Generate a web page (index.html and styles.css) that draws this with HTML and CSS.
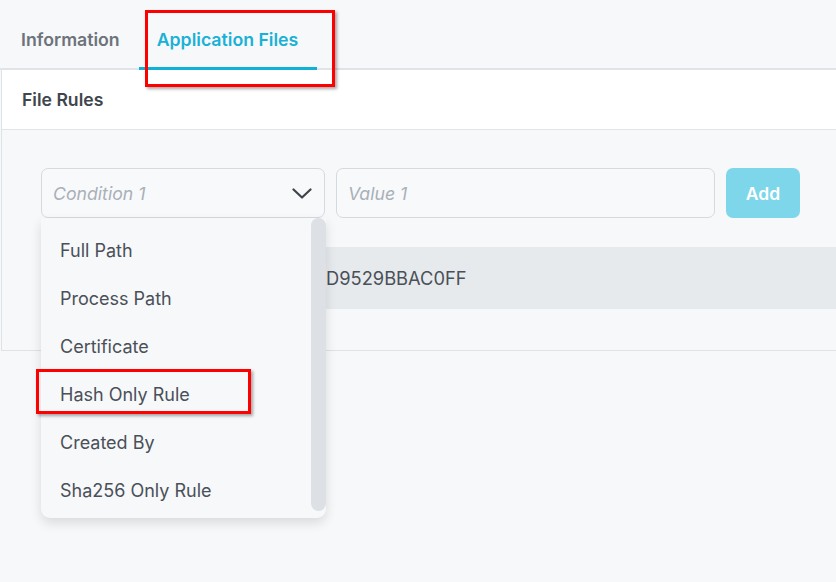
FILE: index.html
```html
<!DOCTYPE html>
<html>
<head>
<meta charset="utf-8">
<link rel="stylesheet" href="styles.css">
</head>
<body>
<div class="tabs">
  <div class="tab">Information</div>
  <div class="tab active">Application Files</div>
</div>
<div class="panel">
  <div class="panel-header">File Rules</div>
  <div class="panel-body">
    <div class="form-row">
      <div class="select">
        <span class="placeholder">Condition 1</span>
        <svg class="chevron" width="20" height="11" viewBox="0 0 20 11"><polyline points="1.5,1.5 10,9.5 18.5,1.5" fill="none" stroke="#3e444a" stroke-width="2.2" stroke-linecap="round" stroke-linejoin="round"/></svg>
      </div>
      <div class="input"><span class="placeholder">Value 1</span></div>
      <button class="add">Add</button>
    </div>
    <div class="rule-row">
      <div class="cell-type">Hash Only Rule</div>
      <div class="cell-value">D9529BBAC0FF</div>
    </div>
  </div>
</div>

<div class="dropdown">
  <div class="option">Full Path</div>
  <div class="option">Process Path</div>
  <div class="option">Certificate</div>
  <div class="option">Hash Only Rule</div>
  <div class="option">Created By</div>
  <div class="option">Sha256 Only Rule</div>
  <div class="scrollbar"></div>
</div>

<div class="mark mark-tab"></div>
<div class="mark mark-option"></div>
</body>
</html>
```
FILE: styles.css
```css
* { box-sizing: border-box; }
html, body {
  margin: 0;
  padding: 0;
  background: #f7f8fa;
  font-family: "Inter", "Lato", sans-serif;
  color: #4a5058;
  width: 836px;
  height: 582px;
  overflow: hidden;
  position: relative;
}
.tabs {
  display: flex;
  height: 70px;
  padding-left: 2px;
  border-bottom: 2px solid #e0e3e7;
}
.tab {
  position: relative;
  display: flex;
  align-items: center;
  padding: 10px 19px 0;
  font-size: 17.7px;
  font-weight: 600;
  color: #6c737b;
}
.tab.active { color: #19b1d6; padding-left: 18px; }
.tab.active::after {
  content: "";
  position: absolute;
  left: 0;
  right: 0;
  bottom: -2px;
  height: 3px;
  background: #11b0d7;
}
.panel {
  margin-left: 1px;
  border-left: 1px solid #dfe2e6;
  border-bottom: 1px solid #dfe2e6;
}
.panel-header {
  background: #ffffff;
  height: 60px;
  padding-left: 20px;
  padding-bottom: 1px;
  display: flex;
  align-items: center;
  font-size: 17.6px;
  font-weight: 600;
  color: #40464d;
  border-bottom: 1px solid #e1e4e8;
}
.panel-body {
  padding: 38px 0 41px 39px;
}
.form-row {
  display: flex;
  gap: 11px;
  height: 50px;
}
.select, .input {
  border: 1px solid #d6d9de;
  border-radius: 7px;
  display: flex;
  align-items: center;
  padding-left: 11px;
  background: #f8f9fb;
}
.select { width: 284px; justify-content: space-between; padding-right: 12px; }
.input { width: 379px; }
.placeholder {
  font-style: italic;
  font-size: 17.7px;
  color: #a9b0b8;
}
.chevron { display: block; margin-top: 1px; }
.add {
  width: 74px;
  border: none;
  border-radius: 7px;
  background: #7dd6ea;
  color: #ffffff;
  font-family: inherit;
  font-size: 17.5px;
  font-weight: 600;
  padding: 0;
}
.rule-row {
  margin-top: 29px;
  height: 62px;
  background: #e7eaed;
  display: flex;
  align-items: center;
  font-size: 18.3px;
  color: #4a5058;
}
.cell-type { width: 285px; padding-left: 19px; }
.dropdown {
  position: absolute;
  left: 41px;
  top: 218px;
  width: 285px;
  height: 300px;
  padding-top: 8px;
  background: #f7f8fa;
  border-radius: 0 0 9px 9px;
  box-shadow: 0 5px 12px rgba(0, 0, 0, 0.12);
}
.option {
  height: 48px;
  display: flex;
  align-items: center;
  padding-left: 19px;
  font-size: 18px;
  color: #4a5058;
}
.scrollbar {
  position: absolute;
  right: 0;
  top: 0;
  width: 15px;
  height: 293px;
  background: #dde0e4;
  border-radius: 8px;
}
.mark {
  position: absolute;
  border: 3px solid #ff0000;
  box-shadow: 2px 2px 3px rgba(0, 0, 0, 0.35);
}
.mark-tab { left: 145px; top: 10px; width: 190px; height: 77px; }
.mark-option { left: 36px; top: 369px; width: 215px; height: 45px; }
```
